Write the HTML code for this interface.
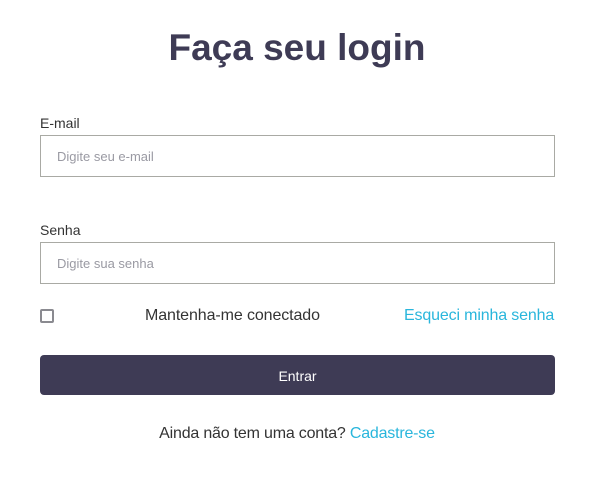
<!DOCTYPE html>
<html><head><style>
body{margin:0;width:606px;height:478px;background:#fff;font-family:"Liberation Sans",sans-serif;position:relative;overflow:hidden}
.a{position:absolute}
h1{position:absolute;left:0;width:594px;top:27px;margin:0;text-align:center;font-size:37px;font-weight:bold;color:#3e3b55}
.lbl{font-size:14px;color:#333}
.in{left:40px;width:513px;height:40px;border:1px solid #a9aaa4;box-sizing:content-box}
.ph{position:absolute;left:16px;top:13px;font-size:13px;color:#9a9aa3}
</style></head><body>
<h1>Faça seu login</h1>
<div class="a lbl" style="left:40px;top:115px">E-mail</div>
<div class="a in" style="top:135px"><span class="ph">Digite seu e-mail</span></div>
<div class="a lbl" style="left:40px;top:222px">Senha</div>
<div class="a in" style="top:242px"><span class="ph">Digite sua senha</span></div>
<div class="a" style="left:40px;top:309px;width:10px;height:10px;border:2px solid #8a8a90;border-radius:2px"></div>
<div class="a" style="left:145px;top:307px;font-size:16px;color:#333;letter-spacing:-0.1px">Mantenha-me conectado</div>
<div class="a" style="left:404px;top:307px;font-size:16px;color:#29b6dc;letter-spacing:-0.15px">Esqueci minha senha</div>
<div class="a" style="left:40px;top:355px;width:515px;height:40px;background:#3e3b55;border-radius:4px;color:#fff;font-size:14px;text-align:center;line-height:42px">Entrar</div>
<div class="a" style="left:0;width:594px;top:425px;text-align:center;font-size:16px;color:#333;letter-spacing:-0.2px">Ainda não tem uma conta? <span style="color:#29b6dc">Cadastre-se</span></div>
</body></html>
